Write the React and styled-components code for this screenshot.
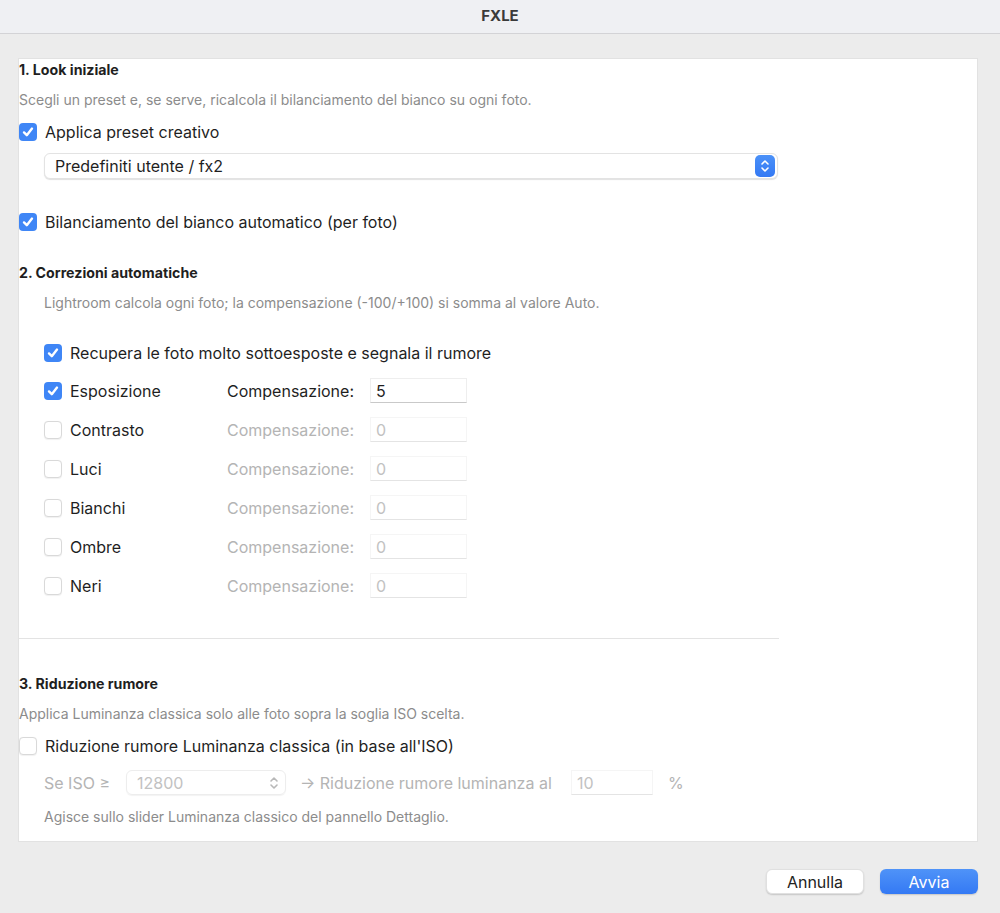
import React from "react";
import styled, { createGlobalStyle } from "styled-components";

const GlobalStyle = createGlobalStyle`
  html, body { margin: 0; padding: 0; }
  body {
    background: #ececec;
    font-family: Inter, "Noto Sans", "Liberation Sans", sans-serif;
    color: #222;
    -webkit-font-smoothing: antialiased;
  }
  * { box-sizing: border-box; }
`;

const Window = styled.div`
  width: 1000px;
  height: 913px;
  display: flex;
  flex-direction: column;
  background: #ececec;
`;

const TitleBar = styled.div`
  height: 34px;
  flex: none;
  display: flex;
  align-items: center;
  justify-content: center;
  background: #eff0f3;
  border-bottom: 1px solid #d3d3d6;
  font-size: 15px;
  font-weight: 700;
  color: #3a3a3a;
  padding-bottom: 3px;
`;

const Main = styled.div`
  padding: 24px 22px 0 18px;
`;

const Panel = styled.div`
  height: 784px;
  background: #fff;
  border: 1px solid #e2e2e2;
  display: flex;
  flex-direction: column;
`;

const Heading = styled.div`
  font-size: 14.2px;
  font-weight: 700;
  line-height: 16px;
  color: #1f1f1f;
  margin-top: ${(p) => p.$mt || 0}px;
`;

const Desc = styled.div`
  font-size: 14px;
  line-height: 16px;
  color: #8c8c8c;
  margin-top: ${(p) => p.$mt || 0}px;
  padding-left: ${(p) => p.$indent || 0}px;
`;

const CheckRow = styled.label`
  display: flex;
  align-items: center;
  gap: 8px;
  height: 20px;
  font-size: 16px;
  color: ${(p) => (p.$disabled ? "#b4b4b4" : "#1f1f1f")};
  margin-top: ${(p) => p.$mt || 0}px;
  margin-left: ${(p) => p.$indent || 0}px;
  white-space: nowrap;
`;

const Box = styled.span`
  width: 18px;
  height: 18px;
  flex: none;
  border-radius: 4px;
  display: flex;
  align-items: center;
  justify-content: center;
  background: ${(p) => (p.$checked ? "#3f86f6" : "#fff")};
  border: ${(p) => (p.$checked ? "none" : "1px solid #d9d9d9")};
  box-shadow: ${(p) => (p.$checked ? "none" : "0 0.5px 1px rgba(0,0,0,0.06)")};
`;

const Check = ({ checked }) => (
  <Box $checked={checked}>
    {checked && (
      <svg width="14" height="14" viewBox="0 0 14 14">
        <path d="M3 7.4 L5.8 10.2 L11 3.6" fill="none" stroke="#fff" strokeWidth="2.4" strokeLinecap="round" strokeLinejoin="round" />
      </svg>
    )}
  </Box>
);

const Select = styled.div`
  margin-top: ${(p) => p.$mt || 0}px;
  margin-left: 25px;
  width: 734px;
  height: 26px;
  border-radius: 6px;
  background: #fff;
  border: 1px solid #e3e3e3;
  box-shadow: 0 1px 1px rgba(0, 0, 0, 0.12);
  display: flex;
  align-items: center;
  justify-content: space-between;
  padding: 0 2px 0 10px;
  font-size: 16px;
  color: #1f1f1f;
`;

const Stepper = styled.span`
  width: 20px;
  height: 22px;
  border-radius: 5px;
  background: linear-gradient(#4b91f8, #3479f4);
  display: flex;
  align-items: center;
  justify-content: center;
`;

const Chevrons = ({ color }) => (
  <svg width="10" height="14" viewBox="0 0 10 14">
    <path d="M2 5 L5 2 L8 5 M2 9 L5 12 L8 9" fill="none" stroke={color} strokeWidth="1.6" strokeLinecap="round" strokeLinejoin="round" />
  </svg>
);

const Section2 = styled.div`
  padding-left: 25px;
  display: flex;
  flex-direction: column;
`;

const Grid = styled.div`
  display: grid;
  grid-template-columns: 183px 143px 97px;
  grid-auto-rows: 25px;
  row-gap: 14px;
  margin-top: 15px;
  align-items: center;
`;

const FieldLabel = styled.span`
  font-size: 16px;
  color: ${(p) => (p.$disabled ? "#b4b4b4" : "#1f1f1f")};
  white-space: nowrap;
`;

const Input = styled.div`
  width: ${(p) => p.$w || 97}px;
  height: 25px;
  display: flex;
  align-items: center;
  padding-left: 5px;
  font-size: 16px;
  color: ${(p) => (p.$disabled ? "#c2c2c2" : "#1f1f1f")};
  background: #fff;
  border: 1px solid ${(p) => (p.$disabled ? "#f5f5f5" : "#eeeeee")};
  border-bottom-color: ${(p) => (p.$disabled ? "#e4e4e4" : "#c9c9c9")};
`;

const Divider = styled.div`
  width: 760px;
  height: 1px;
  background: #e3e3e3;
  margin-top: 40px;
`;

const IsoRow = styled.div`
  margin-top: 14px;
  padding-left: 25px;
  display: flex;
  align-items: center;
  height: 25px;
  font-size: 16px;
  color: #b4b4b4;
  white-space: nowrap;
`;

const IsoLabel = styled.span`
  width: 82px;
`;

const IsoSelect = styled.div`
  width: 160px;
  height: 25px;
  border-radius: 6px;
  border: 1px solid #ededed;
  box-shadow: 0 1px 1px rgba(0, 0, 0, 0.05);
  display: flex;
  align-items: center;
  justify-content: space-between;
  padding: 0 6px 0 10px;
  color: #c2c2c2;
  margin-right: 14px;
`;

const Arrow = styled.span`
  width: 271px;
`;

const Percent = styled.span`
  margin-left: 15px;
`;

const Footer = styled.div`
  display: flex;
  justify-content: flex-end;
  gap: 16px;
  padding: 27px 22px 0 0;
`;

const Button = styled.button`
  width: 98px;
  height: 25px;
  border-radius: 6px;
  font-family: inherit;
  font-size: 16px;
  border: ${(p) => (p.$primary ? "none" : "1px solid #e0e0e0")};
  background: ${(p) => (p.$primary ? "linear-gradient(#4f93f8, #3479f4)" : "#fff")};
  color: ${(p) => (p.$primary ? "#fff" : "#222")};
  box-shadow: 0 1px 1.5px rgba(0, 0, 0, 0.16);
  padding: 0;
`;

const rows = [
  { name: "Esposizione", checked: true, value: "5" },
  { name: "Contrasto", checked: false, value: "0" },
  { name: "Luci", checked: false, value: "0" },
  { name: "Bianchi", checked: false, value: "0" },
  { name: "Ombre", checked: false, value: "0" },
  { name: "Neri", checked: false, value: "0" },
];

export default function App() {
  return (
    <Window>
      <GlobalStyle />
      <TitleBar>FXLE</TitleBar>
      <Main>
        <Panel>
          <Heading $mt={3}>1. Look iniziale</Heading>
          <Desc $mt={14}>Scegli un preset e, se serve, ricalcola il bilanciamento del bianco su ogni foto.</Desc>
          <CheckRow $mt={14}>
            <Check checked />
            Applica preset creativo
          </CheckRow>
          <Select $mt={11}>
            <span>Predefiniti utente / fx2</span>
            <Stepper>
              <Chevrons color="#fff" />
            </Stepper>
          </Select>
          <CheckRow $mt={33}>
            <Check checked />
            Bilanciamento del bianco automatico (per foto)
          </CheckRow>

          <Heading $mt={33}>2. Correzioni automatiche</Heading>
          <Section2>
            <Desc $mt={14}>Lightroom calcola ogni foto; la compensazione (-100/+100) si somma al valore Auto.</Desc>
            <CheckRow $mt={32}>
              <Check checked />
              Recupera le foto molto sottoesposte e segnala il rumore
            </CheckRow>
            <Grid>
              {rows.map((r) => (
                <React.Fragment key={r.name}>
                  <CheckRow>
                    <Check checked={r.checked} />
                    {r.name}
                  </CheckRow>
                  <FieldLabel $disabled={!r.checked}>Compensazione:</FieldLabel>
                  <Input $disabled={!r.checked}>{r.value}</Input>
                </React.Fragment>
              ))}
            </Grid>
          </Section2>
          <Divider />

          <Heading $mt={37}>3. Riduzione rumore</Heading>
          <Desc $mt={14}>Applica Luminanza classica solo alle foto sopra la soglia ISO scelta.</Desc>
          <CheckRow $mt={14}>
            <Check checked={false} />
            Riduzione rumore Luminanza classica (in base all'ISO)
          </CheckRow>
          <IsoRow>
            <IsoLabel>Se ISO ≥</IsoLabel>
            <IsoSelect>
              <span>12800</span>
              <Chevrons color="#b8b8b8" />
            </IsoSelect>
            <Arrow>→ Riduzione rumore luminanza al</Arrow>
            <Input $disabled $w={82}>10</Input>
            <Percent>%</Percent>
          </IsoRow>
          <Desc $mt={14} $indent={25}>Agisce sullo slider Luminanza classico del pannello Dettaglio.</Desc>
        </Panel>
      </Main>
      <Footer>
        <Button>Annulla</Button>
        <Button $primary>Avvia</Button>
      </Footer>
    </Window>
  );
}
